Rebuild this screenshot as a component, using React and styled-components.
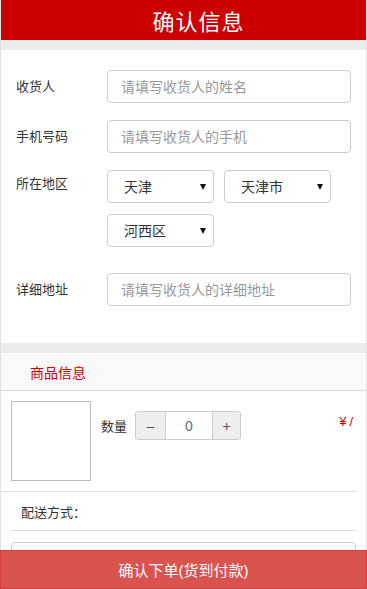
import React from "react";
import styled, { createGlobalStyle } from "styled-components";

const RED = "#cc0000";
const FONT = `"Liberation Sans", "Noto Sans CJK SC", sans-serif`;

const GlobalStyle = createGlobalStyle`
  html, body {
    margin: 0;
    padding: 0;
    background: #fff;
  }
  body {
    font-family: ${FONT};
    color: #333;
  }
  * {
    box-sizing: border-box;
  }
`;

const Page = styled.div`
  border-left: 1px solid #e2e2e2;
  border-right: 1px solid #e2e2e2;
  padding-bottom: 60px;
`;

const Header = styled.header`
  height: 40px;
  background: ${RED};
  color: #fff;
  font-size: 22px;
  display: flex;
  align-items: center;
  justify-content: center;
  padding-left: 30px;
  letter-spacing: 1px;
`;

const Gap = styled.div`
  height: 10px;
  background: #ebebeb;
`;

const Form = styled.section`
  padding: 20px 0 37px 15px;
  display: flex;
  flex-direction: column;
  gap: ${props => props.gap || 17}px;
`;

const Row = styled.div`
  display: grid;
  grid-template-columns: 91px 244px;
  align-items: ${props => (props.top ? "start" : "center")};
  margin-top: ${props => props.spaceTop || 0}px;
`;

const Label = styled.label`
  font-size: 13px;
  color: #333;
  line-height: ${props => (props.top ? "31px" : "normal")};
  margin-top: -2px;
`;

const Input = styled.input`
  width: 244px;
  height: 33px;
  border: 1px solid #ccc;
  border-radius: 4px;
  padding: 0 13px;
  font-family: ${FONT};
  font-size: 14px;
  color: #333;
  outline: none;

  &::placeholder {
    color: #999;
  }
`;

const SelectGroup = styled.div`
  display: flex;
  flex-wrap: wrap;
  column-gap: 10px;
  row-gap: 11px;
`;

const SelectBox = styled.div`
  position: relative;
  width: 107px;
  height: 33px;
`;

const Select = styled.select`
  appearance: none;
  width: 100%;
  height: 100%;
  border: 1px solid #ccc;
  border-radius: 4px;
  background: #fff;
  padding: 0 0 0 16px;
  font-family: ${FONT};
  font-size: 14px;
  color: #333;
  outline: none;
`;

const Arrow = styled.span`
  position: absolute;
  right: 8px;
  top: 14px;
  width: 0;
  height: 0;
  border-left: 3px solid transparent;
  border-right: 3px solid transparent;
  border-top: 6px solid #111;
  pointer-events: none;
`;

const SectionHead = styled.div`
  height: 38px;
  background: #f9f9f9;
  border-bottom: 1px solid #ddd;
  display: flex;
  align-items: center;
  padding-left: 29px;
  font-size: 14px;
  color: ${RED};
`;

const Product = styled.div`
  display: flex;
  align-items: flex-start;
  padding: 10px 0 10px 10px;
  border-bottom: 1px solid #ddd;
  margin: 0 10px 0 0;
`;

const Thumb = styled.div`
  width: 80px;
  height: 80px;
  border: 1px solid #bbb;
  flex-shrink: 0;
`;

const Qty = styled.div`
  display: flex;
  align-items: center;
  margin: 10px 0 0 10px;
  font-size: 13px;
  color: #333;
  flex: 1;
`;

const Stepper = styled.div`
  display: flex;
  height: 29px;
  margin-left: 8px;
  border: 1px solid #ccc;
  border-radius: 3px;
  overflow: hidden;
`;

const StepButton = styled.button`
  width: ${props => props.w}px;
  background: #eee;
  border: 0;
  padding: 0;
  font-family: ${FONT};
  font-size: 14px;
  color: #555;
  border-left: ${props => (props.right ? "1px solid #ccc" : "0")};
  border-right: ${props => (props.right ? "0" : "1px solid #ccc")};
`;

const StepValue = styled.div`
  width: 46px;
  background: #fff;
  display: flex;
  align-items: center;
  justify-content: center;
  font-size: 14px;
  color: #5a6b8c;
`;

const Price = styled.div`
  margin-top: 13px;
  font-size: 13px;
  color: ${RED};
  letter-spacing: 3px;
`;

const Delivery = styled.div`
  margin: 0 10px;
  height: 39px;
  border-bottom: 1px solid #ddd;
  display: flex;
  align-items: center;
  padding-left: 10px;
  font-size: 13px;
  color: #333;
`;

const NoteBox = styled.div`
  margin: 11px 10px 0;
  height: 90px;
  border: 1px solid #ccc;
  border-radius: 4px;
`;

const SubmitBar = styled.button`
  position: fixed;
  left: 0;
  right: 0;
  bottom: 0;
  height: 39px;
  background: #d9534f;
  border: 1px solid #d43f3a;
  color: #fff;
  font-family: ${FONT};
  font-size: 15px;
  font-weight: normal;
`;

const AreaSelect = ({ value, options }) => (
  <SelectBox>
    <Select defaultValue={value}>
      {options.map(o => (
        <option key={o}>{o}</option>
      ))}
    </Select>
    <Arrow />
  </SelectBox>
);

export default function App() {
  return (
    <>
      <GlobalStyle />
      <Page>
        <Header>确认信息</Header>
        <Gap />
        <Form>
          <Row>
            <Label>收货人</Label>
            <Input placeholder="请填写收货人的姓名" />
          </Row>
          <Row>
            <Label>手机号码</Label>
            <Input placeholder="请填写收货人的手机" />
          </Row>
          <Row top>
            <Label top>所在地区</Label>
            <SelectGroup>
              <AreaSelect value="天津" options={["天津", "北京"]} />
              <AreaSelect value="天津市" options={["天津市"]} />
              <AreaSelect value="河西区" options={["河西区", "和平区"]} />
            </SelectGroup>
          </Row>
          <Row spaceTop={9}>
            <Label>详细地址</Label>
            <Input placeholder="请填写收货人的详细地址" />
          </Row>
        </Form>
        <Gap />
        <SectionHead>商品信息</SectionHead>
        <Product>
          <Thumb />
          <Qty>
            数量
            <Stepper>
              <StepButton w={30}>–</StepButton>
              <StepValue>0</StepValue>
              <StepButton w={28} right>
                +
              </StepButton>
            </Stepper>
          </Qty>
          <Price>¥/</Price>
        </Product>
        <Delivery>配送方式：</Delivery>
        <NoteBox />
      </Page>
      <SubmitBar>确认下单(货到付款)</SubmitBar>
    </>
  );
}
